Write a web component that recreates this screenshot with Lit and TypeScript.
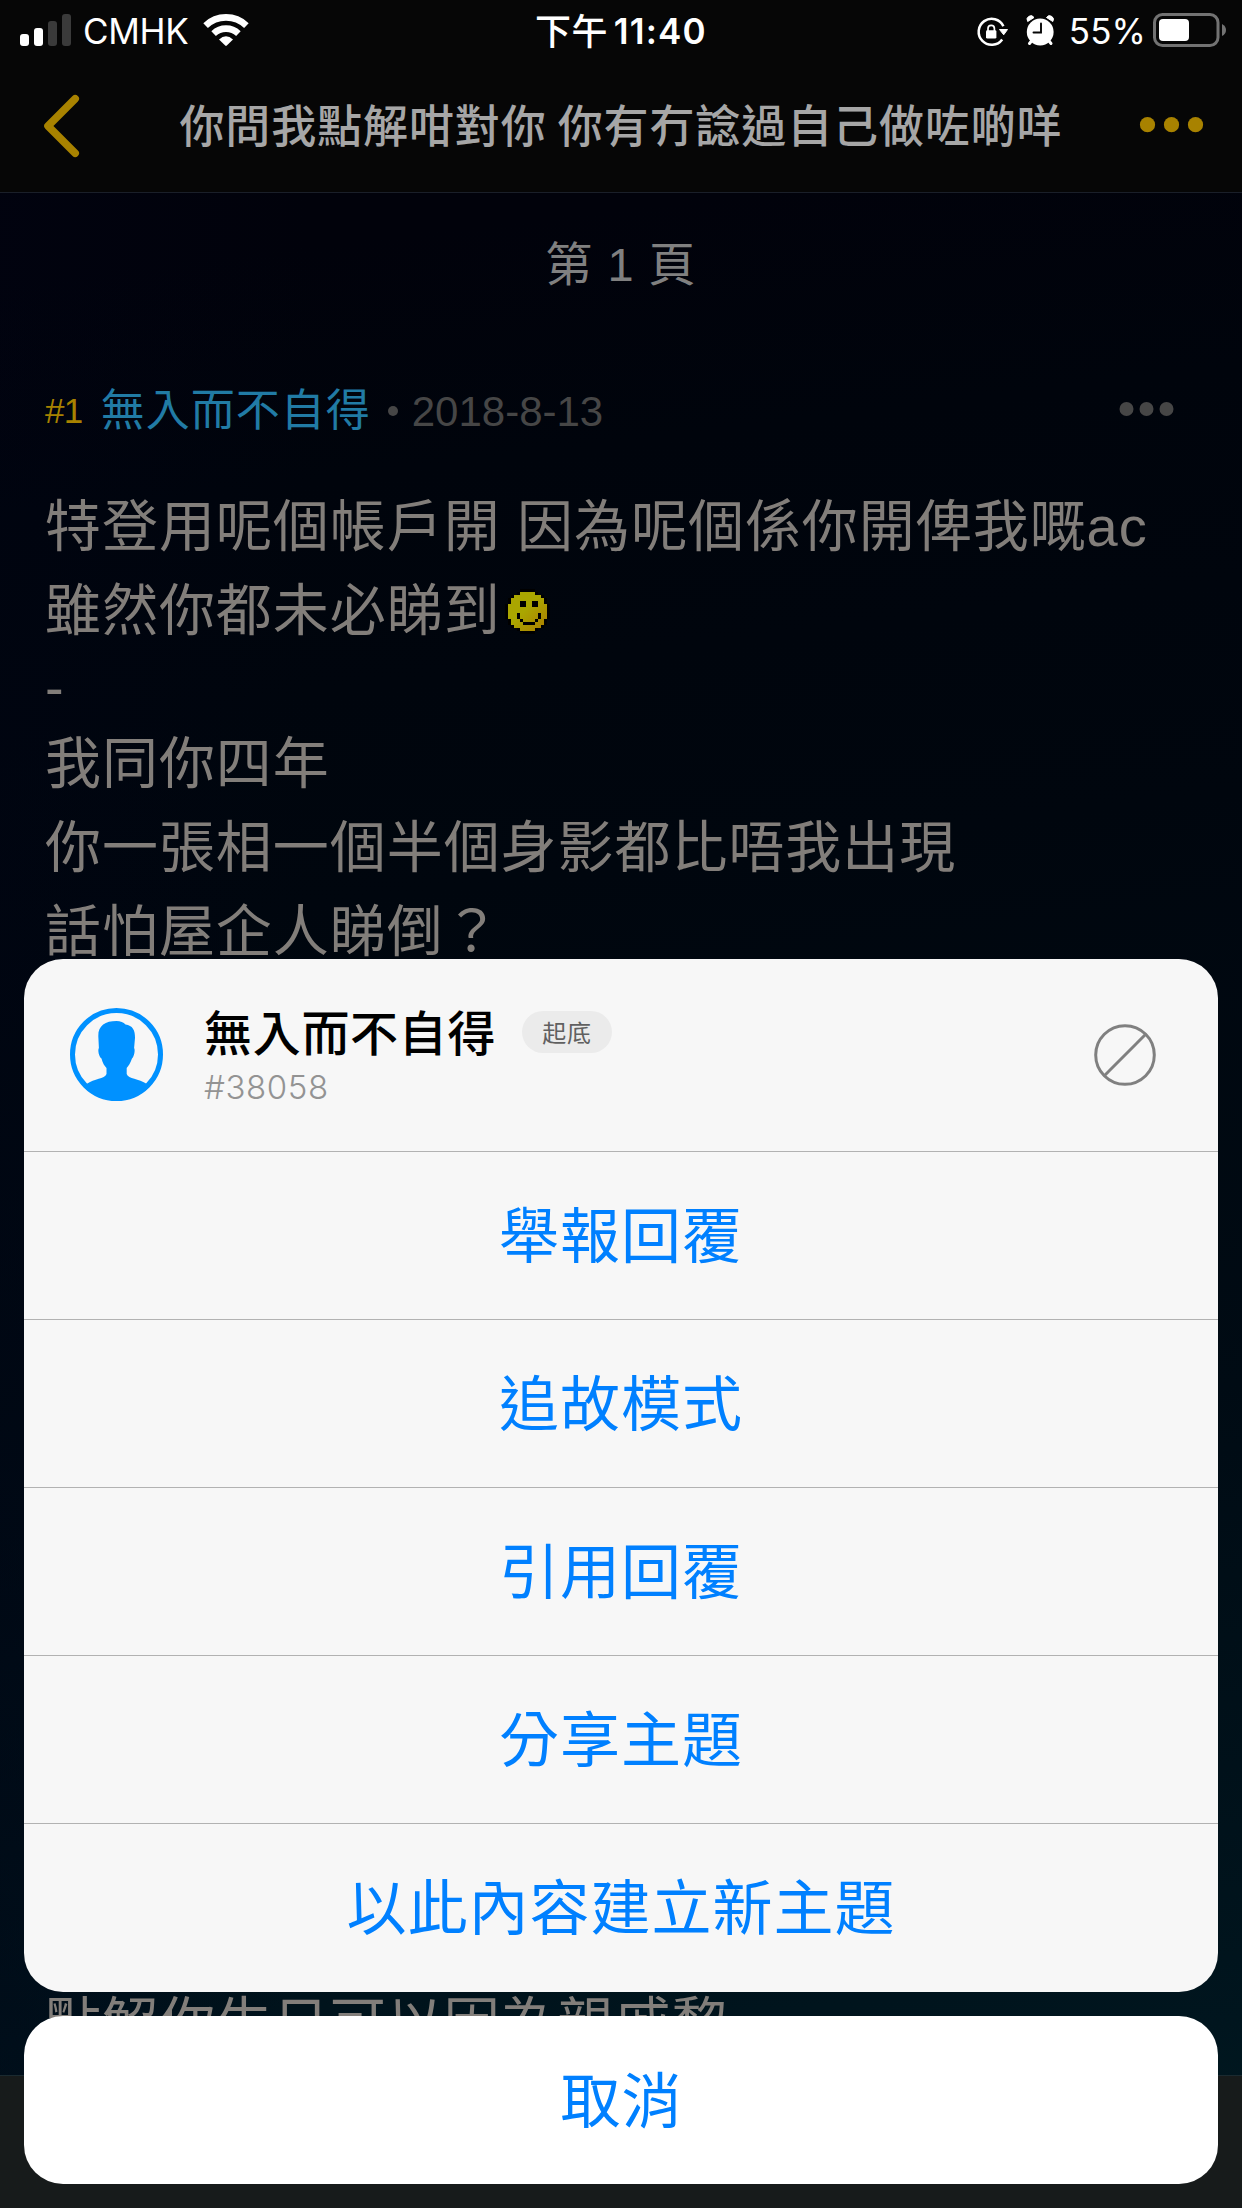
import { LitElement, html, css, svg } from "lit";
import { customElement, property } from "lit/decorators.js";

const SMILEY_ROWS: [number, number][] = [
  [4, 8], [2, 10], [1, 11], [1, 11], [0, 12], [0, 12], [0, 12],
  [0, 12], [0, 12], [1, 11], [1, 11], [2, 10], [4, 8],
];
const SMILEY_FACE: [number, number, number, number][] = [
  [4, 3, 2, 2], [8, 3, 2, 2], [3, 7, 1, 2], [4, 9, 1, 1],
  [5, 10, 4, 1], [9, 9, 1, 1], [10, 7, 1, 2],
];

@customElement("status-bar")
class StatusBar extends LitElement {
  static styles = css`
    :host {
      display: grid;
      grid-template-columns: 1fr auto 1fr;
      height: 60px;
      color: #fff;
      font: 400 35px/60px "Inter", "Noto Sans CJK TC", sans-serif;
    }
    .side { display: flex; align-items: flex-start; }
    .left { padding-left: 20px; }
    .right { justify-content: flex-end; padding-right: 15px; }
    svg { display: block; flex: none; }
    .carrier { margin: 1px 15px 0 11px; letter-spacing: -0.35px; }
    .time { display: flex; gap: 6px; margin-top: 1px; font-weight: 600; }
    .meridiem { font: 500 36px/60px "Noto Sans CJK TC", sans-serif; margin-top: -2px; letter-spacing: 0.3px; }
    .clock { letter-spacing: 1.2px; }
    .percent { margin: 1px 6px 0 15px; letter-spacing: 0.1px; }
  `;
  render() {
    return html`
      <div class="side left">
        <svg width="52" height="60" viewBox="20 0 52 60">
          <rect x="20" y="34" width="9" height="12" rx="3" fill="#fff" />
          <rect x="34" y="28" width="9" height="18" rx="3" fill="#fff" />
          <rect x="48" y="21" width="9" height="25" rx="3" fill="#3a3a3a" />
          <rect x="62" y="14" width="9" height="32" rx="3" fill="#3a3a3a" />
        </svg>
        <span class="carrier">CMHK</span>
        <svg width="46" height="60" viewBox="203 0 46 60">
          <g fill="none" stroke="#fff" stroke-width="6.6">
            <path d="M205.6 25.6A29.5 29.5 0 0 1 246.4 25.6" />
            <path d="M213.6 33.6A18 18 0 0 1 238.4 33.6" />
          </g>
          <path d="M219 39.5Q226 33.200 233 39.500L226.800 45.600Q226 46.300 225.200 45.600Z" fill="#fff" />
        </svg>
      </div>
      <div class="time"><span class="meridiem">下午</span><span class="clock">11:40</span></div>
      <div class="side right">
        <svg width="32" height="60" viewBox="976 0 32 60">
          <path d="M1003.400 26.200A13 13 0 1 0 1002.200 39.400" fill="none" stroke="#fff" stroke-width="2.500" />
          <path d="M999.500 29.500H1007.500L1003.700 34.800Z" fill="#fff" stroke="#fff" stroke-linejoin="round" />
          <rect x="986" y="30.200" width="10.400" height="8.400" rx="1.400" fill="#fff" />
          <path d="M988 31V28.600A3.200 3.200 0 0 1 994.400 28.600V31" fill="none" stroke="#fff" stroke-width="1.700" />
        </svg>
        <svg class="alarm" width="46" height="60" viewBox="1008 0 46 60">
          <circle cx="1040.200" cy="32" r="13.400" fill="#fff" />
          <path d="M1031.500 41L1029.500 43.500M1049 41L1051 43.500" stroke="#fff" stroke-width="3" stroke-linecap="round" />
          <path d="M1027.700 21.500A3.700 3.700 0 0 1 1034 17.500ZM1052.800 21.500A3.700 3.700 0 0 0 1046.500 17.500Z" fill="#fff" stroke="#fff" stroke-width="1" />
          <path d="M1041 23.500V32.500H1033.500" fill="none" stroke="#060606" stroke-width="1.900" stroke-linecap="round" />
        </svg>
        <span class="percent">55%</span>
        <svg width="75" height="60" viewBox="1152 0 75 60">
          <rect x="1154.500" y="14.500" width="63.500" height="31" rx="8" fill="none" stroke="#727272" stroke-width="3" />
          <rect x="1159" y="19" width="30" height="22" rx="4" fill="#fff" />
          <path d="M1222 24Q1226 26 1226 30T1222 36Z" fill="#727272" />
        </svg>
      </div>`;
  }
}

@customElement("thread-nav")
class ThreadNav extends LitElement {
  static styles = css`
    :host {
      display: grid;
      grid-template-columns: 121px 1fr 121px;
      height: 132px;
      border-bottom: 1px solid #1a1f29;
    }
    svg { display: block; }
    .more { justify-self: end; }
    .title {
      margin: 0;
      text-align: center;
      white-space: nowrap;
      color: #a6a6a6;
      font: 500 45px/128px "Noto Sans CJK TC", sans-serif;
      letter-spacing: 0.9px;
    }
  `;
  render() {
    return html`
      <svg width="121" height="132" viewBox="0 60 121 132">
        <path d="M75.200 98.700L48 126L75.200 153.300" fill="none" stroke="#a88200" stroke-width="7.600" stroke-linecap="round" stroke-linejoin="round" />
      </svg>
      <h1 class="title">你問我點解咁對你 你有冇諗過自己做咗啲咩</h1>
      <svg class="more" width="121" height="132" viewBox="1121 60 121 132" fill="#a88200">
        <circle cx="1147.500" cy="124.700" r="7.600" />
        <circle cx="1171.500" cy="124.700" r="7.600" />
        <circle cx="1195.500" cy="124.700" r="7.600" />
      </svg>`;
  }
}

@customElement("thread-post")
class ThreadPost extends LitElement {
  static styles = css`
    :host { display: flex; flex-direction: column; }
    .meta {
      display: flex;
      align-items: baseline;
      height: 72px;
      padding: 0 68px 0 45px;
      font: 400 42px/68px "Liberation Sans", "Noto Sans CJK TC", sans-serif;
    }
    .floor { font-size: 35px; color: #a88200; margin-right: 18px; letter-spacing: -0.6px; position: relative; top: -3px; }
    .author { color: #217ba5; font: 400 44px/68px "Noto Sans CJK TC", sans-serif; letter-spacing: 1px; }
    .dot { width: 10px; height: 10px; border-radius: 50%; background: #464646; margin: 3px 14px 0 17px; align-self: center; }
    .date { color: #464646; }
    .more { margin-left: auto; align-self: center; }
    .body {
      flex: 1;
      display: flex;
      flex-direction: column;
      margin-top: 40px;
      padding: 0 45px 9px;
      color: #827e7a;
      font: 400 56px/84px "Liberation Sans", "Noto Sans CJK TC", sans-serif;
      letter-spacing: 0.95px;
      white-space: nowrap;
    }
    .line { height: 84px; }
    .dash { height: 69px; line-height: 70px; }
    .last { margin-top: auto; }
    .face { vertical-align: -4px; margin-left: 4px; }
  `;
  render() {
    return html`
      <div class="meta">
        <span class="floor">#1</span>
        <span class="author">無入而不自得</span>
        <span class="dot"></span>
        <span class="date">2018-8-13</span>
        <svg class="more" width="55" height="16" viewBox="0 0 55 16" fill="#464646">
          <circle cx="7.500" cy="8" r="7" /><circle cx="27.500" cy="8" r="7" /><circle cx="47.500" cy="8" r="7" />
        </svg>
      </div>
      <div class="body">
        <div class="line">特登用呢個帳戶開 因為呢個係你開俾我嘅ac</div>
        <div class="line">雖然你都未必睇到<svg class="face" width="45" height="45" viewBox="-1 -1 15 15" shape-rendering="crispEdges">
          <defs><linearGradient id="skin" x1="0" y1="0" x2="1" y2="1">
            <stop offset="0.450" stop-color="#aaa600" /><stop offset="1" stop-color="#ab7c00" />
          </linearGradient></defs>
          ${SMILEY_ROWS.map(([a, b], y) => svg`<rect x=${a - 1} y=${y} width=${b - a + 3} height="1" fill="#000" />`)}
          <rect x="4" y="-1" width="5" height="15" fill="#000" />
          <path fill="url(#skin)" d=${SMILEY_ROWS.map(([a, b], y) => `M${a} ${y}h${b - a + 1}v1h${a - b - 1}z`).join("")} />
          ${SMILEY_FACE.map(([x, y, w, h]) => svg`<rect x=${x} y=${y} width=${w} height=${h} fill="#000" />`)}
        </svg></div>
        <div class="line dash">-</div>
        <div class="line">我同你四年</div>
        <div class="line">你一張相一個半個身影都比唔我出現</div>
        <div class="line">話怕屋企人睇倒？</div>
        <div class="line last">點解你生日可以因為親戚黎</div>
      </div>`;
  }
}

@customElement("action-sheet")
class ActionSheet extends LitElement {
  @property({ attribute: false }) actions: string[] = [];
  static styles = css`
    :host {
      display: flex;
      flex-direction: column;
      gap: 24px;
      font-family: "Noto Sans CJK TC", sans-serif;
    }
    .group { border-radius: 39px; background: #f7f7f7; overflow: hidden; padding-bottom: 1px; }
    .user { display: flex; height: 192px; padding: 0 62px 0 46px; }
    .avatar, .block { display: block; flex: none; margin-top: 49px; }
    .block { margin-left: auto; margin-top: 65px; }
    .info { margin: 43px 0 0 41px; }
    .name-row { display: flex; align-items: center; height: 60px; gap: 26px; }
    .name { font-size: 48px; line-height: 60px; font-weight: 500; color: #000; letter-spacing: 0.7px; margin-top: -5px; }
    .tag {
      height: 42px;
      padding: 0 20px;
      border-radius: 21px;
      background: #ebebeb;
      color: #606060;
      font-size: 24px;
      line-height: 41px;
      letter-spacing: 0.8px;
    }
    .id { font: 300 33px/40px "Inter", sans-serif; color: #939393; letter-spacing: 0.6px; margin-top: 5px; }
    .row {
      display: block;
      box-sizing: border-box;
      width: 100%;
      height: 168px;
      margin: 0;
      padding: 0 0 7px;
      border: 0;
      background: none;
      color: #0080ff;
      font: 400 60px/80px "Noto Sans CJK TC", sans-serif;
      letter-spacing: 1px;
      text-align: center;
    }
    .group .row { border-top: 1px solid #b2b2b2; }
    .row.cancel { border-radius: 39px; background: #fff; padding: 0 0 7px 1px; }
  `;
  render() {
    return html`
      <div class="group">
        <div class="user">
          <svg class="avatar" width="93" height="93" viewBox="70.500 1008 93 93">
            <defs><clipPath id="ring"><circle cx="117" cy="1054.500" r="46" /></clipPath></defs>
            <circle cx="117" cy="1054.500" r="44" fill="none" stroke="#0091ff" stroke-width="5" />
            <path clip-path="url(#ring)" fill="#0091ff" d="M98.800 1036C98.500 1025.500 106 1021 117 1021C121 1021 124 1022.500 126 1024.500C133 1025.500 135.800 1030 135.500 1038L134.600 1048C136 1050 134.500 1057 132.500 1058.500C131 1063 129 1066 127.200 1068V1074C129 1079 139 1078.500 147.500 1084L153 1101H82L87 1084C95 1078.500 105 1079 107 1074V1068C105 1066 103 1063 102 1058.500C99.500 1057 98 1050 99.400 1048Z" />
          </svg>
          <div class="info">
            <div class="name-row"><span class="name">無入而不自得</span><span class="tag">起底</span></div>
            <div class="id">#38058</div>
          </div>
          <svg class="block" width="62" height="62" viewBox="0 0 62 62" fill="none" stroke="#808080" stroke-width="3">
            <circle cx="31" cy="31" r="29.300" /><path d="M10.300 51.700L51.700 10.300" />
          </svg>
        </div>
        ${this.actions.map((label) => html`<button class="row">${label}</button>`)}
      </div>
      <button class="row cancel">取消</button>`;
  }
}

@customElement("app-root")
class AppRoot extends LitElement {
  static styles = css`
    :host { display: block; }
    .screen {
      position: relative;
      display: flex;
      flex-direction: column;
      width: 1242px;
      height: 2208px;
      overflow: hidden;
      background:
        linear-gradient(90deg, rgba(0, 4, 22, 0.35), rgba(0, 4, 22, 0) 25%),
        linear-gradient(173deg, #01020b 0%, #01020b 12%, #00040c 22%, #00060e 40%, #000b14 65%, #00151e 92%, #001a21 100%);
    }
    .top { background: #060606; }
    .page { height: 144px; text-align: center; color: #808080; font: 400 47px/144px "Liberation Sans", "Noto Sans CJK TC", sans-serif; letter-spacing: 1px; }
    .post { flex: 1; margin-top: 36px; }
    .tabs { height: 132px; border-top: 1px solid #1a2a30; background: #171b1b; }
    .sheet { position: absolute; left: 24px; right: 24px; bottom: 24px; }
  `;
  render() {
    return html`
      <div class="screen">
        <header class="top"><status-bar></status-bar><thread-nav></thread-nav></header>
        <div class="page">第 1 頁</div>
        <thread-post class="post"></thread-post>
        <div class="tabs"></div>
        <action-sheet class="sheet" .actions=${["舉報回覆", "追故模式", "引用回覆", "分享主題", "以此內容建立新主題"]}></action-sheet>
      </div>`;
  }
}
